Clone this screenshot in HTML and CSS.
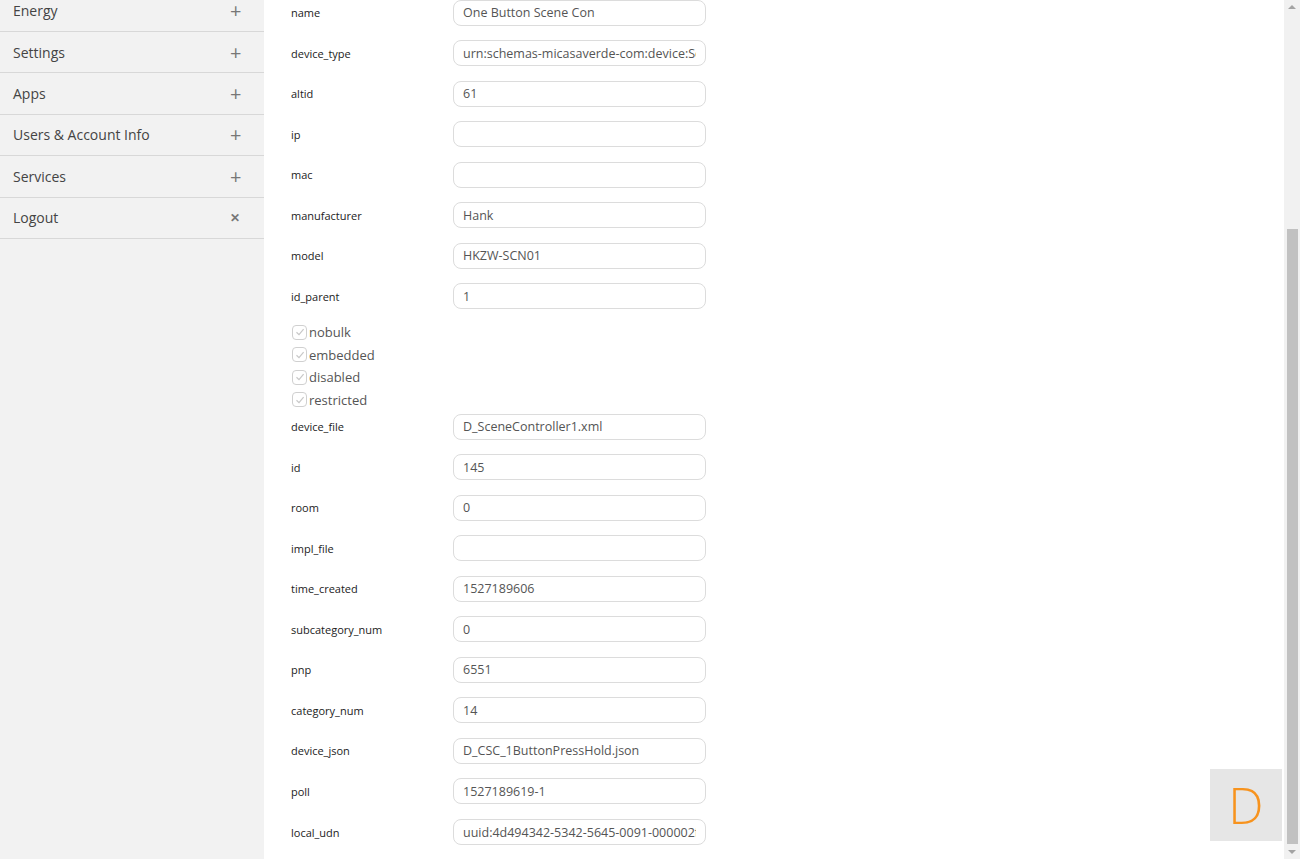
FILE: index.html
```html
<!DOCTYPE html>
<html lang="en">
<head>
    <meta charset="UTF-8">
    <meta name="viewport" content="width=device-width, initial-scale=1.0">
    <title>Device</title>
<link rel="stylesheet" href="styles.css">
</head>
<body>
    <div class="page">
        <div class="sidebar">
            <ul class="menu">
                <li><span>Energy</span><span class="sign">+</span></li>
                <li><span>Settings</span><span class="sign">+</span></li>
                <li><span>Apps</span><span class="sign">+</span></li>
                <li><span>Users &amp; Account Info</span><span class="sign">+</span></li>
                <li><span>Services</span><span class="sign">+</span></li>
                <li><span>Logout</span><span class="sign close">&#x2715;</span></li>
            </ul>
        </div>

        <div class="content">
            <div class="field"><label>name</label><input type="text" value="One Button Scene Con"></div>
            <div class="field"><label>device_type</label><input type="text" value="urn:schemas-micasaverde-com:device:SceneController:1"></div>
            <div class="field"><label>altid</label><input type="text" value="61"></div>
            <div class="field"><label>ip</label><input type="text" value=""></div>
            <div class="field"><label>mac</label><input type="text" value=""></div>
            <div class="field"><label>manufacturer</label><input type="text" value="Hank"></div>
            <div class="field"><label>model</label><input type="text" value="HKZW-SCN01"></div>
            <div class="field"><label>id_parent</label><input type="text" value="1"></div>

            <div class="checks">
                <div class="check"><span class="box"><svg width="10" height="10" viewBox="0 0 10 10"><path d="M1.5 5.2 L4 7.6 L8.6 2.2" fill="none" stroke="#c8c8c8" stroke-width="1.2"/></svg></span>nobulk</div>
                <div class="check"><span class="box"><svg width="10" height="10" viewBox="0 0 10 10"><path d="M1.5 5.2 L4 7.6 L8.6 2.2" fill="none" stroke="#c8c8c8" stroke-width="1.2"/></svg></span>embedded</div>
                <div class="check"><span class="box"><svg width="10" height="10" viewBox="0 0 10 10"><path d="M1.5 5.2 L4 7.6 L8.6 2.2" fill="none" stroke="#c8c8c8" stroke-width="1.2"/></svg></span>disabled</div>
                <div class="check"><span class="box"><svg width="10" height="10" viewBox="0 0 10 10"><path d="M1.5 5.2 L4 7.6 L8.6 2.2" fill="none" stroke="#c8c8c8" stroke-width="1.2"/></svg></span>restricted</div>
            </div>

            <div class="field"><label>device_file</label><input type="text" value="D_SceneController1.xml"></div>
            <div class="field"><label>id</label><input type="text" value="145"></div>
            <div class="field"><label>room</label><input type="text" value="0"></div>
            <div class="field"><label>impl_file</label><input type="text" value=""></div>
            <div class="field"><label>time_created</label><input type="text" value="1527189606"></div>
            <div class="field"><label>subcategory_num</label><input type="text" value="0"></div>
            <div class="field"><label>pnp</label><input type="text" value="6551"></div>
            <div class="field"><label>category_num</label><input type="text" value="14"></div>
            <div class="field"><label>device_json</label><input type="text" value="D_CSC_1ButtonPressHold.json"></div>
            <div class="field"><label>poll</label><input type="text" value="1527189619-1"></div>
            <div class="field"><label>local_udn</label><input type="text" value="uuid:4d494342-5342-5645-0091-000002fc5d7e"></div>
        </div>

        <div class="scrollbar">
            <span class="arrow up"></span>
            <div class="track"><div class="thumb"></div></div>
            <span class="arrow down"></span>
        </div>
    </div>

    <div class="badge">D</div>
</body>
</html>
```

FILE: styles.css
```css
html, body {
    margin: 0;
    height: 100%;
    overflow: hidden;
}
body {
    font-family: "Open Sans", Arial, sans-serif;
    color: #333;
    background-color: #fff;
}
.page {
    display: flex;
    height: 859px;
}
.sidebar {
    width: 264px;
    flex-shrink: 0;
    background-color: #f2f2f2;
}
.menu {
    list-style: none;
    margin: -9.4px 0 0 0;
    padding: 0;
}
.menu li {
    display: flex;
    justify-content: space-between;
    align-items: center;
    height: 40.4px;
    padding: 0 24px 0 13px;
    border-bottom: 1px solid #d8d8d8;
    font-size: 14px;
    color: #444;
}
.menu .sign {
    font-size: 20px;
    color: #777;
    width: 10px;
    text-align: center;
}
.menu .sign.close {
    font-size: 12px;
    font-weight: 700;
    color: #777;
}
.content {
    flex: 1;
    padding: 0 0 0 27px;
}
.field {
    display: flex;
    align-items: center;
    height: 26px;
    margin-bottom: 14.55px;
}
.content > .field:first-child {
    margin-top: -0.5px;
}
.field label {
    width: 162px;
    font-size: 11px;
    color: #222;
}
.field input {
    width: 253px;
    height: 26px;
    box-sizing: border-box;
    border: 1px solid #dcdcdc;
    border-radius: 8px;
    padding: 0 9px;
    font-family: "Open Sans", Arial, sans-serif;
    font-size: 12.5px;
    color: #555;
    background: #fff;
    outline: none;
}
.checks {
    margin: -3px 0 2.7px 0;
}
.check {
    display: flex;
    align-items: center;
    height: 22.5px;
    font-size: 13px;
    color: #555;
}
.check .box {
    display: flex;
    align-items: center;
    justify-content: center;
    width: 13px;
    height: 13px;
    margin: 0 2px 0 1px;
    border: 1px solid #d0d0d0;
    border-radius: 4px;
    background: #fff;
}
.scrollbar {
    width: 16px;
    flex-shrink: 0;
    display: flex;
    flex-direction: column;
    align-items: center;
    background-color: #f1f1f1;
}
.scrollbar .track {
    flex: 1;
    width: 100%;
    display: flex;
    flex-direction: column;
    justify-content: flex-end;
    align-items: center;
}
.scrollbar .thumb {
    width: 11px;
    height: 615px;
    margin-bottom: 1px;
    background-color: #c1c1c1;
}
.arrow {
    width: 0;
    height: 0;
    margin: 5px 0;
    border-left: 4px solid transparent;
    border-right: 4px solid transparent;
}
.arrow.up {
    border-bottom: 4px solid #a3a3a3;
}
.arrow.down {
    border-top: 4px solid #a3a3a3;
}
.badge {
    position: absolute;
    left: 1210px;
    top: 769px;
    width: 72px;
    height: 72px;
    display: flex;
    align-items: center;
    justify-content: center;
    background-color: #e6e6e6;
    color: #f7931e;
    font-family: "Open Sans", Arial, sans-serif;
    font-weight: 300;
    font-size: 50px;
}
```
